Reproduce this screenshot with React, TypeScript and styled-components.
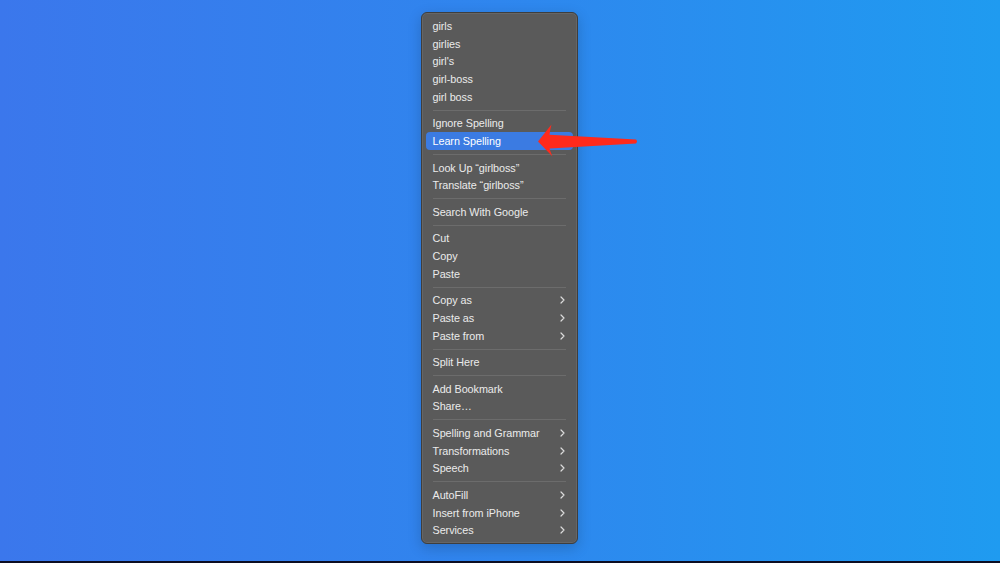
import styled, { createGlobalStyle } from 'styled-components'

const GlobalStyle = createGlobalStyle`
  html, body {
    margin: 0;
    padding: 0;
    width: 1000px;
    height: 563px;
    overflow: hidden;
  }
  body {
    font-family: 'Liberation Sans', Arial, sans-serif;
  }
`

const Screen = styled.div`
  position: relative;
  width: 1000px;
  height: 563px;
  display: flex;
  flex-direction: column;
`

const Desktop = styled.div`
  flex: 1;
  display: flex;
  justify-content: center;
  align-items: flex-start;
  padding: 12px 2px 0 0;
  box-sizing: border-box;
  background: linear-gradient(90deg, #3b77ec 0%, #2f86ee 50%, #1f9bf0 100%);
`

const BottomEdge = styled.div`
  height: 2px;
  background: #0c0d22;
`

const Menu = styled.div`
  width: 157px;
  box-sizing: border-box;
  padding: 4px 4px 3.5px;
  background: #5a5a5a;
  border: 1px solid #3e3e3e;
  border-radius: 6px;
  box-shadow: inset 0 0 0 1px rgba(255, 255, 255, 0.08), 0 4px 14px rgba(0, 0, 0, 0.18);
  display: flex;
  flex-direction: column;
`

const Row = styled.div<{ $active?: boolean }>`
  height: 17.8px;
  display: flex;
  align-items: center;
  justify-content: space-between;
  padding: 0 7px;
  border-radius: 4px;
  font-size: 10.8px;
  letter-spacing: -0.05px;
  color: ${(p) => (p.$active ? '#ffffff' : '#ebebeb')};
  background: ${(p) => (p.$active ? '#3b7be2' : 'transparent')};
  white-space: nowrap;
`

const Separator = styled.div`
  height: 1px;
  margin: 3.8px 7px;
  background: #6c6c6c;
`

const Chevron = styled.svg`
  width: 5px;
  height: 8px;
  margin-right: 1px;
`

const Arrow = styled.svg`
  position: absolute;
  left: 0;
  top: 0;
  pointer-events: none;
`

type Item = { label: string; sub?: boolean; active?: boolean }

const groups: Item[][] = [
  [{ label: 'girls' }, { label: 'girlies' }, { label: "girl's" }, { label: 'girl-boss' }, { label: 'girl boss' }],
  [{ label: 'Ignore Spelling' }, { label: 'Learn Spelling', active: true }],
  [{ label: 'Look Up \u201cgirlboss\u201d' }, { label: 'Translate \u201cgirlboss\u201d' }],
  [{ label: 'Search With Google' }],
  [{ label: 'Cut' }, { label: 'Copy' }, { label: 'Paste' }],
  [
    { label: 'Copy as', sub: true },
    { label: 'Paste as', sub: true },
    { label: 'Paste from', sub: true },
  ],
  [{ label: 'Split Here' }],
  [{ label: 'Add Bookmark' }, { label: 'Share\u2026' }],
  [
    { label: 'Spelling and Grammar', sub: true },
    { label: 'Transformations', sub: true },
    { label: 'Speech', sub: true },
  ],
  [
    { label: 'AutoFill', sub: true },
    { label: 'Insert from iPhone', sub: true },
    { label: 'Services', sub: true },
  ],
]

const SubIcon = () => (
  <Chevron viewBox="0 0 5 8">
    <path d="M1 1 L4 4 L1 7" fill="none" stroke="#dcdcdc" strokeWidth="1.2" strokeLinecap="round" strokeLinejoin="round" />
  </Chevron>
)

export default function App() {
  return (
    <>
      <GlobalStyle />
      <Screen>
        <Desktop>
          <Menu>
            {groups.map((group, gi) => (
              <div key={gi}>
                {gi > 0 && <Separator />}
                {group.map((item) => (
                  <Row key={item.label} $active={item.active}>
                    <span>{item.label}</span>
                    {item.sub && <SubIcon />}
                  </Row>
                ))}
              </div>
            ))}
          </Menu>
        </Desktop>
        <BottomEdge />
        <Arrow width="1000" height="563" viewBox="0 0 1000 563">
          <path
            d="M538 141.5 L551.5 124.5 Q550 130 549.5 134.8 L636 139.6 Q638 141.5 636 143.4 L549.5 148.6 Q550.5 152.5 552.5 156.5 Z"
            fill="#ff2a1c"
          />
        </Arrow>
      </Screen>
    </>
  )
}
